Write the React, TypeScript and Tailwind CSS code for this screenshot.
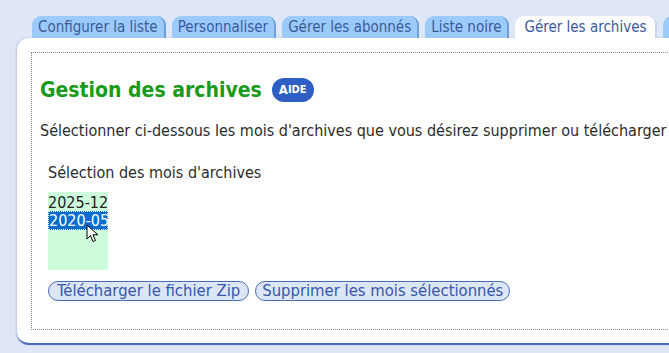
const tabs = [
  "Configurer la liste",
  "Personnaliser",
  "Gérer les abonnés",
  "Liste noire",
  "Gérer les archives",
  "Statistiques",
];

function Tab({ label, active }: { label: string; active?: boolean }) {
  return (
    <div
      className={
        "h-[22px] shrink-0 rounded-t-[9px] border-r-2 pt-[1px] text-[15px] leading-[20px] text-[#3b5a9c] " +
        (active ? "border-[#c9d6ee] bg-white px-[9px]" : "border-[#6f9fd8] bg-[#9ccbfb] px-[6px]")
      }
    >
      {label}
    </div>
  );
}

function Cursor() {
  return (
    <svg className="absolute left-[38px] top-[32px]" width="14" height="20" viewBox="0 0 14 20">
      <path d="M1 1 L1 15 L4.5 11.5 L7 17.5 L9.5 16.5 L7 10.8 L12 10.8 Z" fill="white" stroke="black" strokeWidth="1" strokeLinejoin="round" />
    </svg>
  );
}

export default function App() {
  return (
    <div className="h-[353px] w-full overflow-hidden bg-[#dfe6f6] font-['DejaVu_Sans_Condensed','DejaVu_Sans',sans-serif]">
      <div className="w-[760px] pl-[17px] pt-[16px]">
        <div className="flex gap-[6px] pl-[15px]">
          {tabs.map((t, i) => (
            <Tab key={t} label={t} active={i === 4} />
          ))}
        </div>
        <div className="h-[307px] rounded-[12px] border-b-2 border-[#4a6db8] bg-white px-[14px] pt-[14px] shadow-[-1px_0_2px_rgba(120,140,180,0.35)]">
          <div className="h-[278px] border border-dotted border-[#8a8a8a] pl-[8px] pt-[24px]">
            <div className="flex items-center gap-[10px]">
              <h1 className="text-[21px] font-bold leading-[26px] text-[#189a1c]">Gestion des archives</h1>
              <span className="flex h-[24px] items-center rounded-full bg-[#2f5fc4] px-[7px] text-[13px] font-bold text-white">
                A<span className="text-[11px]">IDE</span>
              </span>
            </div>
            <p className="mt-[18px] whitespace-nowrap text-[16px] leading-[20px] text-[#2b2b2b]">
              Sélectionner ci-dessous les mois d'archives que vous désirez supprimer ou télécharger en format Zip.
            </p>
            <div className="ml-[8px] mt-[22px]">
              <p className="text-[16px] leading-[20px] text-[#2b2b2b]">Sélection des mois d'archives</p>
              <div className="relative mt-[9px] h-[78px] w-[60px] overflow-hidden whitespace-nowrap bg-[#ccfcdc] pt-[2px] text-[16px] leading-[17px]">
                <div className="text-[#222]">2025-12</div>
                <div className="border border-dotted border-white bg-[#0a6ccc] text-white">2020-05</div>
                <Cursor />
              </div>
              <div className="mt-[11px] flex gap-[6px]">
                <button className="rounded-full border border-[#4a6db8] bg-[#dde6f7] px-[8px] text-[16.5px] leading-[18px] text-[#3657a8]">
                  Télécharger le fichier Zip
                </button>
                <button className="rounded-full border border-[#4a6db8] bg-[#dde6f7] px-[6px] text-[16.5px] leading-[18px] text-[#3657a8]">
                  Supprimer les mois sélectionnés
                </button>
              </div>
            </div>
          </div>
        </div>
      </div>
    </div>
  );
}
